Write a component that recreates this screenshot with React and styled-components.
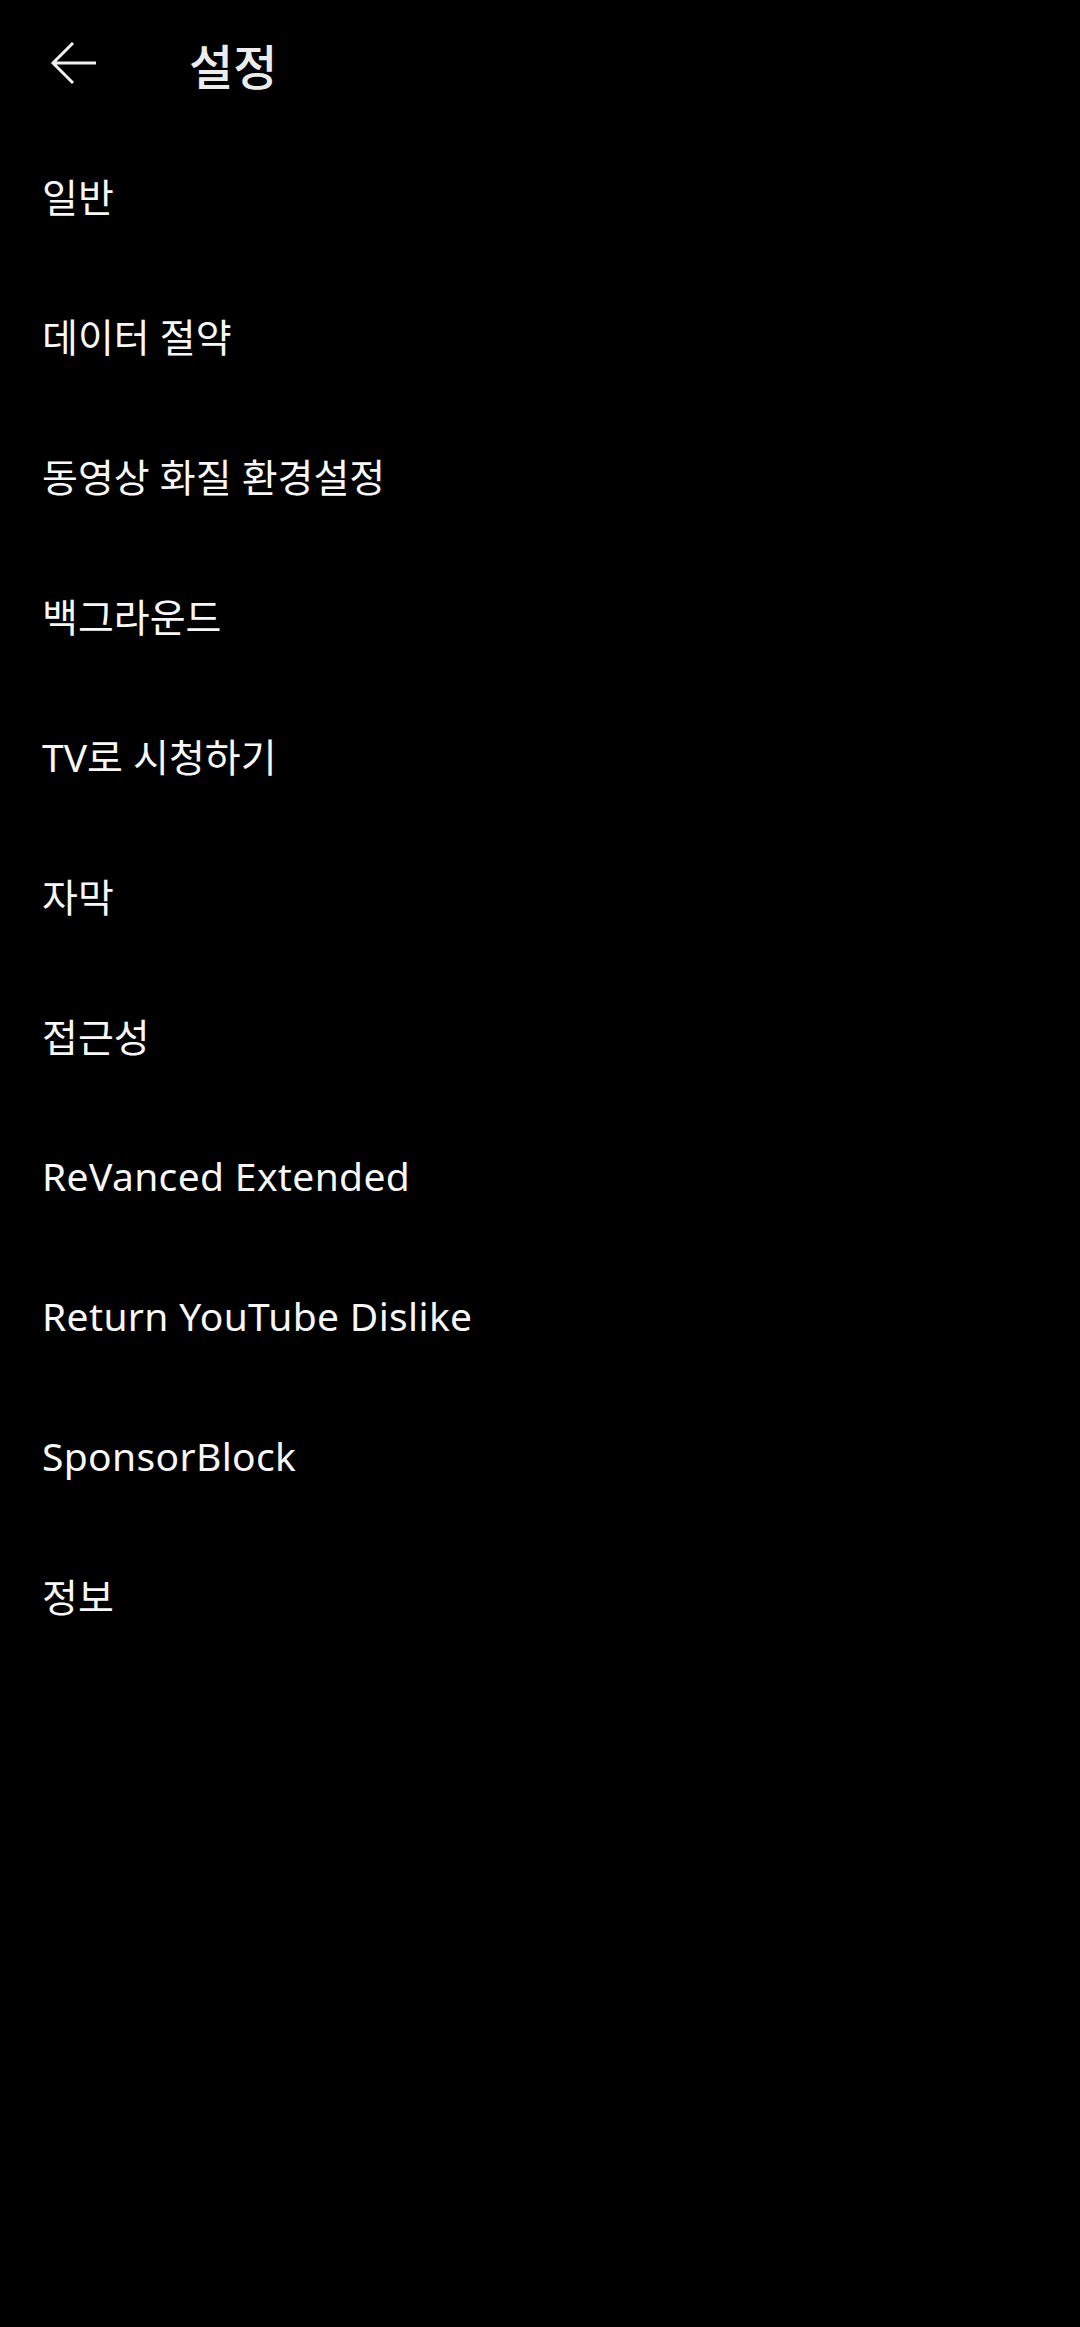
import React from "react";
import styled, { createGlobalStyle } from "styled-components";

const Global = createGlobalStyle`
  html, body { margin: 0; padding: 0; background: #000; }
  body { font-family: "Noto Sans", "Noto Sans CJK KR", sans-serif; }
`;

const Page = styled.div`
  width: 1080px;
  min-height: 2327px;
  background: #000;
  color: #f5f5f5;
  display: flex;
  flex-direction: column;
`;

const Header = styled.header`
  height: 125px;
  display: flex;
  align-items: center;
`;

const BackButton = styled.button`
  width: 189px;
  height: 100%;
  padding: 0 0 0 50px;
  margin: 0;
  border: 0;
  background: transparent;
  display: flex;
  align-items: center;
  color: #f0f0f0;
`;

const Title = styled.h1`
  margin: 0;
  font-family: "Noto Sans CJK KR", sans-serif;
  font-size: 48px;
  font-weight: 500;
  color: #ececec;
  line-height: 1;
  padding-top: 2px;
`;

const List = styled.ul`
  list-style: none;
  margin: 0;
  padding: 0;
  display: flex;
  flex-direction: column;
`;

const Row = styled.li`
  height: 140px;
  display: flex;
  align-items: center;
  padding-left: 42px;
  font-size: 39px;
  letter-spacing: ${(p) => (p.$latin ? "0.35px" : "0")};
  color: #f7f7f7;
  font-weight: 400;
`;

const items = [
  "일반",
  "데이터 절약",
  "동영상 화질 환경설정",
  "백그라운드",
  "TV로 시청하기",
  "자막",
  "접근성",
  "ReVanced Extended",
  "Return YouTube Dislike",
  "SponsorBlock",
  "정보",
];

export default function App() {
  return (
    <Page>
      <Global />
      <Header>
        <BackButton aria-label="back">
          <svg width="50" height="44" viewBox="0 0 50 44" fill="none">
            <path
              d="M46 22 H3 M23 2 L3 22 L23 42"
              stroke="currentColor"
              strokeWidth="3"
              strokeLinecap="butt"
              strokeLinejoin="miter"
            />
          </svg>
        </BackButton>
        <Title>설정</Title>
      </Header>
      <List>
        {items.map((t) => (
          <Row key={t} $latin={/^[A-Za-z ]+$/.test(t)}>
            {t}
          </Row>
        ))}
      </List>
    </Page>
  );
}
